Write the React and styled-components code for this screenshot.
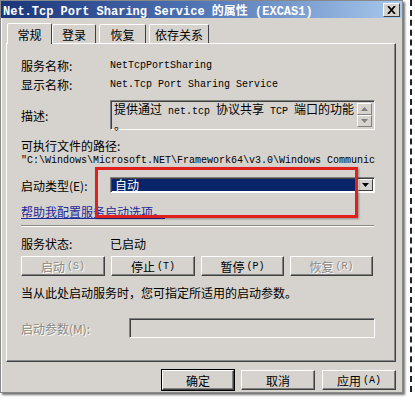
import React from 'react';
import styled, { createGlobalStyle, css } from 'styled-components';

const GlobalStyle = createGlobalStyle`
  html, body {
    margin: 0;
    padding: 0;
    background: #ffffff;
  }
  body {
    font-family: "Noto Sans CJK SC", "Liberation Sans", sans-serif;
    font-size: 12px;
    color: #000;
  }
`;

const face = '#d6d3ce';
const cjk = '"Noto Sans CJK SC", "Liberation Sans", sans-serif';
const mono = '"Liberation Mono", "Noto Sans CJK SC", monospace';

const Page = styled.div`
  width: 415px;
  height: 405px;
  display: flex;
  overflow: hidden;
`;

const BackEdge = styled.div`
  width: 1px;
  margin-left: 7px;
  height: 392px;
  border-left: 2px dashed #222;
`;

const Window = styled.div`
  width: 403px;
  height: 393px;
  box-sizing: border-box;
  background: ${face};
  border: 1px solid #888;
  box-shadow: inset 1px 1px 0 #fff, 2px 2px 2px rgba(0, 0, 0, 0.55);
  display: flex;
  flex-direction: column;
`;

const TitleBar = styled.div`
  height: 17px;
  display: flex;
  align-items: center;
  justify-content: space-between;
  padding: 0 2px 0 2px;
  background: linear-gradient(to right, #1a3479 0%, #4a6fb0 45%, #a8c8ec 100%);
`;

const Title = styled.div`
  font-family: ${mono};
  font-weight: bold;
  font-size: 12px;
  color: #fff;
  white-space: nowrap;
  span {
    font-family: ${cjk};
  }
`;

const CloseButton = styled.div`
  width: 15px;
  height: 12px;
  background: ${face};
  border: 1px solid;
  border-color: #fff #404040 #404040 #fff;
  display: flex;
  align-items: center;
  justify-content: center;
`;

const Body = styled.div`
  flex: 1;
  display: flex;
  flex-direction: column;
  padding: 4px 6px 0 5px;
`;

const Tabs = styled.div`
  display: flex;
  align-items: flex-end;
  height: 21px;
  padding-left: 1px;
`;

const Tab = styled.div(({ $active, $w }) => css`
  width: ${$w}px;
  height: ${$active ? 21 : 19}px;
  box-sizing: border-box;
  display: flex;
  align-items: center;
  justify-content: center;
  font-size: 12px;
  background: ${face};
  border: 1px solid;
  border-bottom: none;
  border-color: #fff #404040 transparent #fff;
  border-radius: 2px 2px 0 0;
  position: relative;
  z-index: ${$active ? 2 : 1};
  margin-right: ${$active ? 0 : 3}px;
  ${$active && css`margin-bottom: -1px;`}
`);

const Panel = styled.div`
  height: 319px;
  box-sizing: border-box;
  border: 1px solid;
  border-color: #fff #404040 #404040 #fff;
  box-shadow: inset -1px -1px 0 #888;
  display: flex;
  flex-direction: column;
  padding: 0 20px 0 14px;
  position: relative;
`;

const Row = styled.div(({ $top, $h }) => css`
  display: flex;
  align-items: center;
  margin-top: ${$top}px;
  height: ${$h}px;
`);

const Label = styled.div(({ $w, $disabled }) => css`
  width: ${$w || 89}px;
  flex: none;
  font-size: 12px;
  color: ${$disabled ? '#8a8884' : '#000'};
  text-shadow: ${$disabled ? '1px 1px 0 #fff' : 'none'};
  white-space: nowrap;
`);

const Value = styled.div`
  font-family: ${mono};
  font-size: 10px;
  white-space: nowrap;
  span {
    font-family: ${cjk};
    font-size: 12px;
  }
`;

const TextBox = styled.div(({ $w }) => css`
  width: ${$w}px;
  box-sizing: border-box;
  border: 1px solid;
  border-color: #808080 #fff #fff #808080;
  box-shadow: inset 1px 1px 0 #404040;
`);

const DescBox = styled(TextBox)`
  height: 30px;
  display: flex;
  padding: 1px 2px 0 3px;
`;

const DescText = styled.div`
  flex: 1;
  font-family: ${mono};
  font-size: 10px;
  line-height: 13px;
  span {
    font-family: ${cjk};
    font-size: 12px;
  }
`;

const ScrollCol = styled.div`
  width: 15px;
  display: flex;
  flex-direction: column;
  justify-content: space-between;
  padding: 1px 0 2px;
`;

const ScrollBtn = styled.div`
  height: 12px;
  box-sizing: border-box;
  border: 1px solid;
  border-color: #fff #808080 #808080 #fff;
  display: flex;
  align-items: center;
  justify-content: center;
`;

const PathText = styled.div`
  font-family: ${mono};
  font-size: 10px;
  white-space: nowrap;
`;

const Combo = styled(TextBox)`
  height: 16px;
  display: flex;
  background: #fff;
  padding: 1px;
`;

const ComboValue = styled.div`
  flex: 1;
  display: flex;
  align-items: center;
  background: #0a246a;
  color: #fff;
  font-size: 12px;
  line-height: 12px;
  padding-left: 3px;
`;

const ComboArrow = styled.div`
  width: 15px;
  background: ${face};
  border: 1px solid;
  border-color: #fff #404040 #404040 #fff;
  box-sizing: border-box;
  display: flex;
  align-items: center;
  justify-content: center;
`;

const Link = styled.div`
  color: #1a2a9a;
  text-decoration: underline;
  font-size: 12px;
`;

const Separator = styled.div`
  margin-top: ${({ $top }) => $top}px;
  height: 0;
  width: 353px;
  border-top: 1px solid #8a8884;
  border-bottom: 1px solid #fff;
`;

const ButtonRow = styled.div`
  display: flex;
  gap: 6px;
  margin-top: ${({ $top }) => $top}px;
`;

const Button = styled.div(({ $w, $disabled, $default }) => css`
  width: ${$w}px;
  height: 20px;
  box-sizing: border-box;
  background: ${face};
  border: 1px solid;
  border-color: #fff #404040 #404040 #fff;
  box-shadow: inset -1px -1px 0 #808080;
  display: flex;
  align-items: center;
  justify-content: center;
  font-size: 12px;
  color: ${$disabled ? '#8a8884' : '#000'};
  text-shadow: ${$disabled ? '1px 1px 0 #fff' : 'none'};
  ${$default && css`
    outline: 1px solid #000;
    outline-offset: 0;
  `}
  small {
    font-family: ${mono};
    font-size: 10px;
    margin-left: 2px;
  }
`);

const Hint = styled.div`
  margin-top: ${({ $top }) => $top}px;
  font-size: 12px;
  white-space: nowrap;
`;

const ParamInput = styled(TextBox)`
  height: 20px;
  background: ${face};
`;

const Highlight = styled.div`
  position: absolute;
  left: 88px;
  top: 123px;
  width: 263px;
  height: 51px;
  box-sizing: border-box;
  border: 3px solid #e0201c;
  box-shadow: 1px 1px 2px rgba(0, 0, 0, 0.35);
  pointer-events: none;
`;

const Footer = styled.div`
  display: flex;
  justify-content: flex-end;
  gap: 7px;
  margin-top: 8px;
`;

const Arrow = ({ up }) => (
  <svg width="7" height="4" viewBox="0 0 7 4">
    <path d={up ? 'M3.5 0 L7 4 L0 4 Z' : 'M0 0 L7 0 L3.5 4 Z'} fill="#808080" />
  </svg>
);

const App = () => (
  <>
    <GlobalStyle />
    <Page>
      <Window>
        <TitleBar>
          <Title>
            Net.Tcp Port Sharing Service <span>的属性</span> (EXCAS1)
          </Title>
          <CloseButton>
            <svg width="9" height="8" viewBox="0 0 9 8">
              <path d="M1 0 L8 8 M8 0 L1 8" stroke="#000" strokeWidth="1.8" fill="none" />
            </svg>
          </CloseButton>
        </TitleBar>

        <Body>
          <Tabs>
            <Tab $active $w={45}>常规</Tab>
            <Tab $w={44}>登录</Tab>
            <Tab $w={47}>恢复</Tab>
            <Tab $w={60}>依存关系</Tab>
          </Tabs>

          <Panel>
            <Row $top={14} $h={14}>
              <Label>服务名称:</Label>
              <Value>NetTcpPortSharing</Value>
            </Row>
            <Row $top={5} $h={14}>
              <Label>显示名称:</Label>
              <Value>Net.Tcp Port Sharing Service</Value>
            </Row>
            <Row $top={9} $h={30}>
              <Label>描述:</Label>
              <DescBox $w={269}>
                <DescText>
                  <span>提供通过</span> net.tcp <span>协议共享</span> TCP <span>端口的功能</span>
                  <br />
                  <span>。</span>
                </DescText>
                <ScrollCol>
                  <ScrollBtn><Arrow up /></ScrollBtn>
                  <ScrollBtn><Arrow /></ScrollBtn>
                </ScrollCol>
              </DescBox>
            </Row>
            <Row $top={9} $h={13}>
              <Label $w={200}>可执行文件的路径:</Label>
            </Row>
            <Row $top={2} $h={12}>
              <PathText>"C:\Windows\Microsoft.NET\Framework64\v3.0\Windows Communic</PathText>
            </Row>
            <Row $top={11} $h={16}>
              <Label>启动类型(E):</Label>
              <Combo $w={269}>
                <ComboValue>自动</ComboValue>
                <ComboArrow>
                  <svg width="7" height="4" viewBox="0 0 7 4">
                    <path d="M0 0 L7 0 L3.5 4 Z" fill="#000" />
                  </svg>
                </ComboArrow>
              </Combo>
            </Row>
            <Row $top={11} $h={14}>
              <Link>帮助我配置服务启动选项。</Link>
            </Row>
            <Separator $top={7} />
            <Row $top={9} $h={14}>
              <Label>服务状态:</Label>
              <Value><span>已启动</span></Value>
            </Row>
            <ButtonRow $top={6}>
              <Button $w={84} $disabled>启动<small>(S)</small></Button>
              <Button $w={84}>停止<small>(T)</small></Button>
              <Button $w={83}>暂停<small>(P)</small></Button>
              <Button $w={83} $disabled>恢复<small>(R)</small></Button>
            </ButtonRow>
            <Hint $top={8}>当从此处启动服务时，您可指定所适用的启动参数。</Hint>
            <Row $top={17} $h={20}>
              <Label $w={108} $disabled>启动参数(M):</Label>
              <ParamInput $w={247} />
            </Row>
            <Highlight />
          </Panel>

          <Footer>
            <Button $w={72} $default>确定</Button>
            <Button $w={74}>取消</Button>
            <Button $w={74}>应用<small>(A)</small></Button>
          </Footer>
        </Body>
      </Window>
      <BackEdge />
    </Page>
  </>
);

export default App;
